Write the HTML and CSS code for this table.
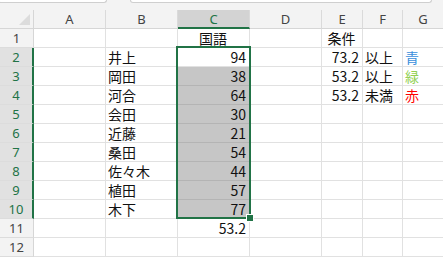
FILE: index.html
```html
<!DOCTYPE html>
<html lang="ja">
<head>
    <meta charset="UTF-8">
    <meta name="viewport" content="width=device-width, initial-scale=1.0">
    <title>Sheet1</title>
    <link rel="stylesheet" href="styles.css">
</head>
<body>

    <div class="bar">
        <div class="namebox"></div>
        <div class="formula"></div>
    </div>

    <div class="sheet">
        <div class="grid">
            <!-- column headers -->
            <div class="corner"></div>
            <div class="hd">A</div>
            <div class="hd">B</div>
            <div class="hd on">C</div>
            <div class="hd">D</div>
            <div class="hd">E</div>
            <div class="hd">F</div>
            <div class="hd">G</div>

            <div class="rh">1</div>
            <div class="c"></div>
            <div class="c"></div>
            <div class="c mid">国語</div>
            <div class="c"></div>
            <div class="c mid">条件</div>
            <div class="c"></div>
            <div class="c"></div>

            <div class="rh on">2</div>
            <div class="c"></div>
            <div class="c">井上</div>
            <div class="c num">94</div>
            <div class="c"></div>
            <div class="c num">73.2</div>
            <div class="c">以上</div>
            <div class="c blue">青</div>

            <div class="rh on">3</div>
            <div class="c"></div>
            <div class="c">岡田</div>
            <div class="c num sel">38</div>
            <div class="c"></div>
            <div class="c num">53.2</div>
            <div class="c">以上</div>
            <div class="c green">緑</div>

            <div class="rh on">4</div>
            <div class="c"></div>
            <div class="c">河合</div>
            <div class="c num sel">64</div>
            <div class="c"></div>
            <div class="c num">53.2</div>
            <div class="c">未満</div>
            <div class="c red">赤</div>

            <div class="rh on">5</div>
            <div class="c"></div>
            <div class="c">会田</div>
            <div class="c num sel">30</div>
            <div class="c"></div>
            <div class="c"></div>
            <div class="c"></div>
            <div class="c"></div>

            <div class="rh on">6</div>
            <div class="c"></div>
            <div class="c">近藤</div>
            <div class="c num sel">21</div>
            <div class="c"></div>
            <div class="c"></div>
            <div class="c"></div>
            <div class="c"></div>

            <div class="rh on">7</div>
            <div class="c"></div>
            <div class="c">桑田</div>
            <div class="c num sel">54</div>
            <div class="c"></div>
            <div class="c"></div>
            <div class="c"></div>
            <div class="c"></div>

            <div class="rh on">8</div>
            <div class="c"></div>
            <div class="c">佐々木</div>
            <div class="c num sel">44</div>
            <div class="c"></div>
            <div class="c"></div>
            <div class="c"></div>
            <div class="c"></div>

            <div class="rh on">9</div>
            <div class="c"></div>
            <div class="c">植田</div>
            <div class="c num sel">57</div>
            <div class="c"></div>
            <div class="c"></div>
            <div class="c"></div>
            <div class="c"></div>

            <div class="rh on">10</div>
            <div class="c"></div>
            <div class="c">木下</div>
            <div class="c num sel">77</div>
            <div class="c"></div>
            <div class="c"></div>
            <div class="c"></div>
            <div class="c"></div>

            <div class="rh">11</div>
            <div class="c"></div>
            <div class="c"></div>
            <div class="c num">53.2</div>
            <div class="c"></div>
            <div class="c"></div>
            <div class="c"></div>
            <div class="c"></div>

            <div class="rh">12</div>
            <div class="c"></div>
            <div class="c"></div>
            <div class="c"></div>
            <div class="c"></div>
            <div class="c"></div>
            <div class="c"></div>
            <div class="c"></div>
        </div>

        <!-- selection frame for C2:C10 and its fill handle -->
        <div class="selection">
            <div class="handle"></div>
        </div>
    </div>

</body>
</html>
```

FILE: styles.css
```css
body {
    margin: 0;
    background: white;
    font-family: "Noto Sans CJK JP", "Noto Sans", sans-serif;
    overflow: hidden;
}
.bar {
    height: 10px;
    background: #f3f3f3;
    display: flex;
    gap: 23px;
}
.namebox, .formula {
    height: 2px;
    background: white;
    border: 1px solid #cfcfcf;
    border-top: none;
    border-radius: 0 0 5px 5px;
}
.namebox {
    width: 107px;
    margin-left: -2px;
}
.formula {
    width: 300px;
}
.sheet {
    position: relative;
}
.grid {
    display: grid;
    grid-template-columns: 34px 72px 72px 72px 72px 41px 40px 41px;
    grid-auto-rows: 19px;
}
.grid > div {
    box-sizing: border-box;
}
.corner {
    background: #f3f3f3;
    border-right: 1px solid #d6d6d6;
    border-bottom: 1px solid #d6d6d6;
    position: relative;
}
.corner::after {
    content: "";
    position: absolute;
    right: 3px;
    bottom: 3px;
    border-left: 11px solid transparent;
    border-bottom: 11px solid #dcdcdc;
}
.hd {
    background: #f3f3f3;
    color: #444;
    font-family: "Noto Sans", sans-serif;
    font-size: 13px;
    text-align: center;
    line-height: 18px;
    border-right: 1px solid #dadada;
    border-bottom: 1px solid #d6d6d6;
}
.hd.on {
    background: #d3d3d3;
    color: #217346;
    border-bottom: 2px solid #217346;
}
.rh {
    background: #f3f3f3;
    color: #444;
    font-family: "Noto Sans", sans-serif;
    font-size: 13px;
    text-align: center;
    line-height: 19px;
    border-right: 1px solid #d6d6d6;
    border-bottom: 1px solid #dcdcdc;
}
.rh.on {
    background: #e1e1e1;
    color: #217346;
    border-right: 2px solid #217346;
}
.c {
    display: flex;
    align-items: flex-end;
    padding: 0 3px 0 2px;
    font-size: 14px;
    line-height: 18px;
    color: #111;
    border-right: 1px solid #e1e1e1;
    border-bottom: 1px solid #e1e1e1;
    white-space: nowrap;
}
.num {
    justify-content: flex-end;
}
.mid {
    justify-content: center;
}
.sel {
    background: #c6c6c6;
    border-bottom-color: #b4b4b4;
}
.blue {
    color: #3a8fdc;
}
.green {
    color: #92d050;
}
.red {
    color: #ff0000;
}
.selection {
    position: absolute;
    left: 176px;
    top: 36px;
    width: 75px;
    height: 173px;
    box-sizing: border-box;
    border: 2px solid #217346;
}
.handle {
    position: absolute;
    right: -5px;
    bottom: -5px;
    width: 6px;
    height: 6px;
    background: #217346;
    border: 1px solid white;
}
```
